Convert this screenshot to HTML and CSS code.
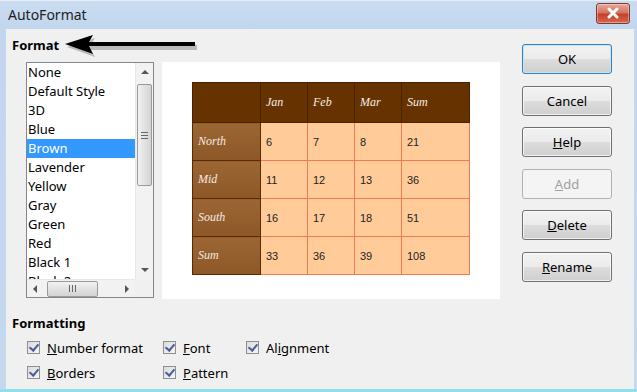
FILE: index.html
```html
<!DOCTYPE html>
<html lang="en">
<head>
    <meta charset="UTF-8">
    <title>AutoFormat</title>
    <link rel="stylesheet" href="styles.css">
</head>
<body>
    <div class="window">
        <div class="titlebar">
            <span class="title">AutoFormat</span>
            <div class="close-btn">
                <svg width="14" height="12" viewBox="0 0 14 12">
                    <path d="M3 2 L11 10 M11 2 L3 10" stroke="#fff" stroke-width="3" stroke-linecap="round"/>
                </svg>
            </div>
        </div>

        <div class="client">
            <div class="main">
                <div class="left">
                    <div class="section-title">
                        Format
                        <svg class="arrow" width="140" height="24" viewBox="0 0 140 24">
                            <path d="M4 13 L32 4 L28 11 L134 11 L134 16 L28 16 L32 23 Z" fill="#777" opacity="0.45"/>
                            <path d="M2 10 L30 1 L26 8 L132 8 L132 12 L26 12 L30 20 Z" fill="#000"/>
                        </svg>
                    </div>
                    <div class="format-body">
                        <div class="listbox">
                            <ul class="items">
                                <li>None</li>
                                <li>Default Style</li>
                                <li>3D</li>
                                <li>Blue</li>
                                <li class="selected">Brown</li>
                                <li>Lavender</li>
                                <li>Yellow</li>
                                <li>Gray</li>
                                <li>Green</li>
                                <li>Red</li>
                                <li>Black 1</li>
                                <li>Black 2</li>
                            </ul>
                            <div class="vscroll">
                                <span class="tri tri-up"></span>
                                <div class="vthumb"><span class="grip-h"></span></div>
                                <span class="tri tri-down"></span>
                            </div>
                            <div class="hscroll">
                                <span class="tri tri-left"></span>
                                <div class="hthumb"><span class="grip-v"></span></div>
                                <span class="tri tri-right"></span>
                            </div>
                            <div class="corner"></div>
                        </div>

                        <div class="preview">
                            <table class="sample">
                                <tr class="head">
                                    <td class="rowhead"></td>
                                    <td>Jan</td>
                                    <td>Feb</td>
                                    <td>Mar</td>
                                    <td>Sum</td>
                                </tr>
                                <tr>
                                    <td class="rowhead">North</td>
                                    <td>6</td><td>7</td><td>8</td><td>21</td>
                                </tr>
                                <tr>
                                    <td class="rowhead">Mid</td>
                                    <td>11</td><td>12</td><td>13</td><td>36</td>
                                </tr>
                                <tr>
                                    <td class="rowhead">South</td>
                                    <td>16</td><td>17</td><td>18</td><td>51</td>
                                </tr>
                                <tr>
                                    <td class="rowhead">Sum</td>
                                    <td>33</td><td>36</td><td>39</td><td>108</td>
                                </tr>
                            </table>
                        </div>
                    </div>
                </div>

                <div class="buttons">
                    <button class="btn default">OK</button>
                    <button class="btn">Cancel</button>
                    <button class="btn"><u>H</u>elp</button>
                    <button class="btn" disabled><u>A</u>dd</button>
                    <button class="btn"><u>D</u>elete</button>
                    <button class="btn"><u>R</u>ename</button>
                </div>
            </div>

            <div class="section-title formatting">Formatting</div>
            <div class="checks">
                <label class="check"><span class="box"></span><span><u>N</u>umber format</span></label>
                <label class="check"><span class="box"></span><span><u>F</u>ont</span></label>
                <label class="check"><span class="box"></span><span>Al<u>i</u>gnment</span></label>
                <label class="check"><span class="box"></span><span><u>B</u>orders</span></label>
                <label class="check"><span class="box"></span><span><u>P</u>attern</span></label>
            </div>
        </div>
    </div>
</body>
</html>
```

FILE: styles.css
```css
body {
    margin: 0;
    padding: 0;
    background: #fff;
    font-family: "Noto Sans", "Open Sans", sans-serif;
    font-size: 13px;
    color: #000;
    overflow: hidden;
}

.window {
    width: 637px;
    height: 392px;
    display: flex;
    flex-direction: column;
    background: linear-gradient(#c9dcf1, #c2d6ee 30px, #c4d9ee);
    box-sizing: border-box;
    border-bottom: 3px solid #8ee0ee;
}

.titlebar {
    height: 29px;
    display: flex;
    align-items: center;
    justify-content: space-between;
    padding: 0 7px 0 8px;
    border-top: 1px solid #e6eef8;
    box-sizing: border-box;
}

.title {
    font-size: 14px;
    color: #1e1e1e;
    margin-top: -2px;
}

.close-btn {
    width: 32px;
    height: 19px;
    margin-top: -4px;
    border: 1px solid #7a3a30;
    border-radius: 3px;
    background: linear-gradient(#e9a99a, #d8735f 45%, #c4402a 55%, #d66a4e);
    display: flex;
    align-items: center;
    justify-content: center;
    box-shadow: inset 0 0 0 1px rgba(255,255,255,0.35);
}

.client {
    flex: 1;
    margin: 0 3px 0 6px;
    background: #f0f0f0;
    padding: 6px 0 0 6px;
}

.main {
    display: flex;
}

.left {
    width: 488px;
}

.section-title {
    font-weight: bold;
    font-size: 13px;
    height: 19px;
    display: flex;
    align-items: center;
}

.arrow {
    margin-left: 4px;
    margin-top: 2px;
}

.format-body {
    display: flex;
    gap: 8px;
    margin: 8px 0 0 14px;
}

/* list box */
.listbox {
    width: 128px;
    height: 236px;
    box-sizing: border-box;
    border: 1px solid #828790;
    background: #fff;
    display: grid;
    grid-template-columns: 1fr 18px;
    grid-template-rows: 1fr 18px;
    overflow: hidden;
}

.items {
    list-style: none;
    margin: 0;
    padding: 0;
    overflow: hidden;
}

.items li {
    height: 19px;
    line-height: 19px;
    padding-left: 1px;
    white-space: nowrap;
}

.items li.selected {
    background: #3399ff;
    color: #fff;
}

.vscroll {
    background: #f2f2f2;
    display: flex;
    flex-direction: column;
    align-items: center;
    padding: 7px 0 7px;
    box-sizing: border-box;
    border-left: 1px solid #e8e8e8;
}

.vthumb {
    width: 15px;
    height: 102px;
    margin-top: 10px;
    box-sizing: border-box;
    border: 1px solid #9a9a9a;
    border-radius: 2px;
    background: linear-gradient(90deg, #f2f2f2, #e2e2e2 50%, #d4d4d4);
    display: flex;
    align-items: center;
    justify-content: center;
}

.vscroll .tri-down {
    margin-top: auto;
}

.grip-h {
    width: 7px;
    height: 5px;
    border-top: 1px solid #666;
    border-bottom: 1px solid #666;
    position: relative;
}

.grip-h::after {
    content: '';
    position: absolute;
    left: 0;
    right: 0;
    top: 2px;
    border-top: 1px solid #666;
}

.hscroll {
    background: #f2f2f2;
    display: flex;
    align-items: center;
    padding: 0 6px 0 6px;
    border-top: 1px solid #e8e8e8;
}

.hthumb {
    width: 51px;
    height: 16px;
    margin-left: 10px;
    box-sizing: border-box;
    border: 1px solid #9a9a9a;
    border-radius: 2px;
    background: linear-gradient(#f2f2f2, #e2e2e2 50%, #d4d4d4);
    display: flex;
    align-items: center;
    justify-content: center;
}

.grip-v {
    width: 5px;
    height: 7px;
    border-left: 1px solid #666;
    border-right: 1px solid #666;
    position: relative;
}

.grip-v::after {
    content: '';
    position: absolute;
    top: 0;
    bottom: 0;
    left: 2px;
    border-left: 1px solid #666;
}

.hscroll .tri-right {
    margin-left: auto;
}

.corner {
    background: #f0f0f0;
}

.tri {
    width: 0;
    height: 0;
    border: 4px solid transparent;
}

.tri-up { border-bottom: 4px solid #555; border-top-width: 0; }
.tri-down { border-top: 4px solid #555; border-bottom-width: 0; }
.tri-left { border-right: 4px solid #555; border-left-width: 0; }
.tri-right { border-left: 4px solid #555; border-right-width: 0; }

/* preview */
.preview {
    width: 338px;
    height: 237px;
    background: #fff;
    padding: 20px 0 0 30px;
    box-sizing: border-box;
}

.sample {
    border-collapse: collapse;
    font-family: "Liberation Sans", Arial, sans-serif;
    font-size: 11px;
    color: #222;
}

.sample td {
    width: 47px;
    height: 38px;
    padding: 0 0 0 5px;
    box-sizing: border-box;
    background: #ffcc99;
    border: 1px solid #f27a4e;
    vertical-align: middle;
}

.sample td:last-child {
    width: 68px;
}

.sample td.rowhead {
    width: 68px;
    background: linear-gradient(#9c6634, #8d5727);
    border: 1px solid #5a2a00;
    color: #f4ece2;
    font-family: "Liberation Serif", "DejaVu Serif", serif;
    font-style: italic;
    font-size: 12px;
}

.sample tr.head td {
    height: 40px;
    background: #663300;
    border-color: #4a2200;
    color: #f6eee4;
    font-family: "Liberation Serif", "DejaVu Serif", serif;
    font-style: italic;
    font-size: 12px;
}

/* buttons */
.buttons {
    margin: 9px 0 0 22px;
    display: flex;
    flex-direction: column;
    gap: 11.6px;
}

.btn {
    width: 90px;
    height: 30px;
    font-family: inherit;
    font-size: 13px;
    color: #000;
    border: 1px solid #707070;
    border-radius: 3px;
    background: linear-gradient(#f2f2f2, #ebebeb 50%, #dddddd 50%, #cfcfcf);
    box-shadow: inset 0 0 0 1px rgba(255,255,255,0.7);
    padding: 0;
}

.btn.default {
    border-color: #3c7fb1;
    box-shadow: inset 0 0 0 1px #bfe6fa;
}

.btn:disabled {
    border-color: #adb2b5;
    background: #f4f4f4;
    color: #a0a0a0;
    box-shadow: none;
}

/* formatting */
.formatting {
    margin-top: 14px;
}

.checks {
    display: grid;
    grid-template-columns: 136px 83px auto;
    row-gap: 6px;
    margin: 6px 0 0 15px;
}

.check {
    display: flex;
    align-items: center;
    gap: 7px;
    height: 19px;
}

.box {
    width: 13px;
    height: 13px;
    box-sizing: border-box;
    border: 1px solid #8f8f8f;
    background: linear-gradient(135deg, #dcdcdc, #f6f6f6);
    position: relative;
}

.box::after {
    content: '';
    position: absolute;
    left: 3px;
    top: 0;
    width: 4px;
    height: 7px;
    border-right: 2px solid #4b5e9a;
    border-bottom: 2px solid #4b5e9a;
    transform: rotate(40deg);
}
```
